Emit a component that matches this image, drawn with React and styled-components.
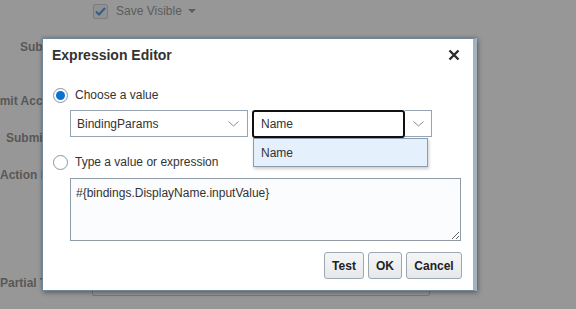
import React from "react";
import styled, { createGlobalStyle } from "styled-components";

const Global = createGlobalStyle`
  html, body { margin: 0; padding: 0; }
  body { font-family: "Liberation Sans", Arial, sans-serif; }
  * { box-sizing: border-box; }
`;

const Page = styled.div`
  position: relative;
  width: 576px;
  height: 309px;
  overflow: hidden;
  background: #979797;
`;

const BgColumn = styled.div`
  display: flex;
  flex-direction: column;
`;

const BgRow = styled.div`
  display: flex;
  align-items: center;
  height: ${(p) => p.$h || 22}px;
  margin-top: ${(p) => p.$top || 0}px;
  white-space: nowrap;
`;

const BgLabel = styled.span`
  margin-left: ${(p) => p.$indent}px;
  font-size: 12px;
  font-weight: bold;
  color: #585858;
  width: ${(p) => p.$w || "auto"};
`;

const BgCheck = styled.span`
  display: inline-flex;
  align-items: center;
  justify-content: center;
  width: 15px;
  height: 15px;
  margin-left: 93px;
  border: 1px solid #7c7c7c;
  border-radius: 2px;
  background: #919191;
`;

const BgText = styled.span`
  margin-left: 8px;
  font-size: 12px;
  color: #5c5c5c;
`;

const BgCaret = styled.span`
  margin-left: 6px;
  width: 0;
  height: 0;
  border-left: 4px solid transparent;
  border-right: 4px solid transparent;
  border-top: 4px solid #5c5c5c;
`;

const BgField = styled.div`
  margin-left: 24px;
  width: 338px;
  height: 26px;
  border: 1px solid #7a7a7a;
  border-radius: 2px;
`;

const Dialog = styled.div`
  position: absolute;
  left: 42px;
  top: 38px;
  width: 435px;
  height: 253px;
  background: #fff;
  border: 1px solid #6f879c;
  border-right: 4px solid #a3b2bf;
  box-shadow: 1px 2px 5px rgba(0, 0, 0, 0.35), 0 -1px 3px rgba(0, 0, 0, 0.15);
  display: flex;
  flex-direction: column;
  color: #333;
`;

const Header = styled.div`
  height: 31px;
  display: flex;
  align-items: center;
  justify-content: space-between;
  padding: 0 13px 0 9px;
`;

const Title = styled.div`
  font-size: 14px;
  font-weight: bold;
  color: #333;
`;

const CloseBtn = styled.span`
  display: inline-flex;
  width: 12px;
  height: 12px;
`;

const Body = styled.div`
  display: flex;
  flex-direction: column;
  padding: 0 10px 0 10px;
`;

const RadioRow = styled.label`
  display: flex;
  align-items: center;
  height: 16px;
  margin-top: ${(p) => p.$top}px;
  font-size: 12px;
  color: #333;
`;

const Radio = styled.span`
  width: 15px;
  height: 15px;
  border-radius: 50%;
  border: 1px solid #8796a3;
  background: #fff;
  display: inline-flex;
  align-items: center;
  justify-content: center;
  margin-right: 7px;
  &::after {
    content: "";
    width: 9px;
    height: 9px;
    border-radius: 50%;
    background: ${(p) => (p.$checked ? "#0a72d0" : "transparent")};
  }
`;

const Indented = styled.div`
  margin-left: 17px;
  margin-top: ${(p) => p.$top}px;
  display: flex;
  align-items: flex-start;
`;

const Select = styled.div`
  width: 178px;
  height: 27px;
  border: 1px solid #95a4b0;
  display: flex;
  align-items: center;
  justify-content: space-between;
  padding: 0 8px 0 6px;
  font-size: 12px;
  color: #333;
  background: #fff;
`;

const Combo = styled.div`
  position: relative;
  margin-left: 4px;
  display: flex;
`;

const ComboInput = styled.div`
  width: 153px;
  height: 28px;
  border: 2px solid #111;
  border-radius: 3px;
  display: flex;
  align-items: center;
  padding-left: 7px;
  font-size: 12px;
  color: #333;
`;

const ComboButton = styled.div`
  width: 27px;
  height: 27px;
  border: 1px solid #95a4b0;
  border-left: none;
  display: flex;
  align-items: center;
  justify-content: center;
  background: #fff;
`;

const Menu = styled.div`
  position: absolute;
  left: 1px;
  top: 28px;
  width: 175px;
  height: 29px;
  background: #e4f0fc;
  border: 1px solid #8c9eae;
  box-shadow: 1px 2px 3px rgba(0, 0, 0, 0.2);
  display: flex;
  align-items: center;
  padding-left: 7px;
  font-size: 12px;
  color: #333;
  z-index: 2;
`;

const TextArea = styled.textarea`
  width: 391px;
  height: 63px;
  border: 1px solid #8f9ca8;
  border-radius: 0;
  background: #fbfcfe;
  font-family: "Liberation Sans", Arial, sans-serif;
  font-size: 12px;
  color: #333;
  padding: 7px 5px;
  resize: both;
  outline: none;
  margin: 0;
  display: block;
`;

const Footer = styled.div`
  display: flex;
  justify-content: flex-end;
  gap: 4px;
  margin-top: 11px;
  padding-right: 11px;
`;

const Button = styled.button`
  height: 27px;
  padding: 0;
  width: ${(p) => p.$w}px;
  border: 1px solid #9ba7b2;
  border-radius: 3px;
  background: linear-gradient(#f4f5f6, #e6e9ec);
  font-family: "Liberation Sans", Arial, sans-serif;
  font-weight: bold;
  font-size: 12px;
  color: #222;
`;

const Chevron = () => (
  <svg width="11" height="6" viewBox="0 0 11 6">
    <path d="M0.5 0.5 L5.5 5 L10.5 0.5" fill="none" stroke="#8a8a8a" strokeWidth="1" />
  </svg>
);

export default function App() {
  return (
    <>
      <Global />
      <Page>
        <BgColumn>
          <BgRow>
            <BgCheck>
              <svg width="11" height="9" viewBox="0 0 11 9">
                <path d="M1 4.5 L4 7.5 L10 1" fill="none" stroke="#2f5f8f" strokeWidth="2" />
              </svg>
            </BgCheck>
            <BgText>Save Visible</BgText>
            <BgCaret />
          </BgRow>
          <BgRow $top={14}>
            <BgLabel $indent={20}>Subtitle</BgLabel>
          </BgRow>
          <BgRow $top={32}>
            <BgLabel $indent={-23}>Submit Access</BgLabel>
          </BgRow>
          <BgRow $top={15}>
            <BgLabel $indent={6}>Submit Mode</BgLabel>
          </BgRow>
          <BgRow $top={15}>
            <BgLabel $indent={0}>Action Listener</BgLabel>
          </BgRow>
          <BgRow $top={84} $h={26}>
            <BgLabel $indent={0} $w="68px">Partial Triggers</BgLabel>
            <BgField />
          </BgRow>
        </BgColumn>

        <Dialog>
          <Header>
            <Title>Expression Editor</Title>
            <CloseBtn>
              <svg width="12" height="12" viewBox="0 0 12 12">
                <path d="M1.5 1.5 L10.5 10.5 M10.5 1.5 L1.5 10.5" stroke="#2b2b2b" strokeWidth="2.4" />
              </svg>
            </CloseBtn>
          </Header>
          <Body>
            <RadioRow $top={17}>
              <Radio $checked />
              Choose a value
            </RadioRow>
            <Indented $top={7}>
              <Select>
                BindingParams
                <Chevron />
              </Select>
              <Combo>
                <ComboInput>Name</ComboInput>
                <ComboButton>
                  <Chevron />
                </ComboButton>
                <Menu>Name</Menu>
              </Combo>
            </Indented>
            <RadioRow $top={16}>
              <Radio />
              Type a value or expression
            </RadioRow>
            <Indented $top={8}>
              <TextArea defaultValue="#{bindings.DisplayName.inputValue}" spellCheck={false} />
            </Indented>
          </Body>
          <Footer>
            <Button $w={40}>Test</Button>
            <Button $w={34}>OK</Button>
            <Button $w={56}>Cancel</Button>
          </Footer>
        </Dialog>
      </Page>
    </>
  );
}
